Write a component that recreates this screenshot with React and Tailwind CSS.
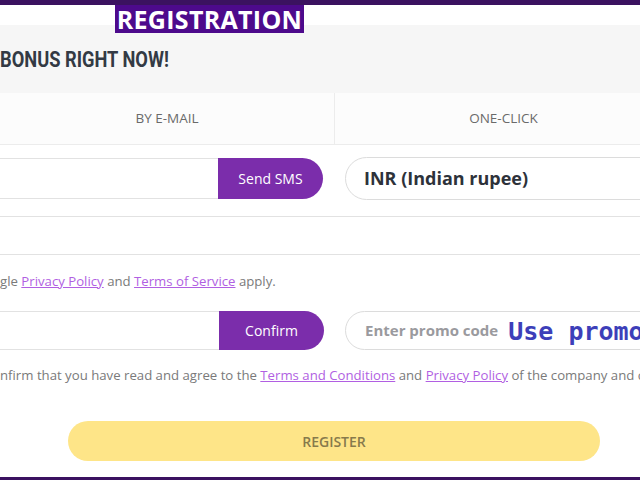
export default function App() {
  const sans = { fontFamily: '"Open Sans", "Noto Sans", sans-serif' };
  return (
    <div className="relative w-[640px] h-[480px] overflow-hidden bg-white" style={sans}>
      <div className="h-[5px] bg-[#3b1260]" />
      <div className="h-[20px] bg-white" />
      <div className="absolute left-[115px] top-[5px] h-[28px] w-[189px] bg-[#4d0a8c] flex items-center justify-center z-10">
        <span className="text-white font-bold text-[25px] leading-none tracking-[0.3px]" style={sans}>REGISTRATION</span>
      </div>
      <div className="h-[68px] bg-[#f6f6f6] flex items-center">
        <span
          className="inline-block origin-left scale-x-[0.83] text-[#333a44] font-bold text-[22px] leading-none mt-[2px] whitespace-nowrap"
          style={{ fontFamily: 'Roboto, sans-serif' }}
        >
          BONUS RIGHT NOW!
        </span>
      </div>
      <div className="flex h-[52px] bg-[#fcfcfc] border-b border-[#ececec] w-[700px]">
        <div className="w-[334px] flex items-center justify-center text-[13.5px] text-[#6a6a6a]">BY E-MAIL</div>
        <div className="w-[338px] border-l border-[#ececec] flex items-center justify-center text-[13.5px] text-[#6a6a6a]">ONE-CLICK</div>
      </div>
      <div className="flex items-center mt-[12px] w-[720px]">
        <div className="w-[218px] h-[41px] border-y border-[#e2e2e2] bg-white" />
        <button className="w-[105px] h-[41px] bg-[#7b2dab] text-white text-[14px] rounded-r-[21px] flex items-center justify-center">
          Send SMS
        </button>
        <div className="ml-[22px] w-[340px] h-[43px] border border-[#dcdcdc] rounded-full flex items-center pl-[18px]">
          <span className="text-[18px] font-bold text-[#2d323a]">INR (Indian rupee)</span>
        </div>
      </div>
      <div className="mt-[16px] h-[39px] border-y border-[#e2e2e2] bg-white" />
      <div className="h-[53px] flex items-center text-[13.2px] text-[#7a7a7a] whitespace-nowrap">
        <span>gle&nbsp;</span>
        <span className="text-[#b15fe2] underline">Privacy Policy</span>
        <span>&nbsp;and&nbsp;</span>
        <span className="text-[#b15fe2] underline">Terms of Service</span>
        <span>&nbsp;apply.</span>
      </div>
      <div className="flex items-center mt-[3px] w-[720px]">
        <div className="w-[219px] h-[39px] border-y border-[#e2e2e2] bg-white" />
        <button className="w-[105px] h-[39px] bg-[#7b2dab] text-white text-[14px] rounded-r-[20px] flex items-center justify-center">
          Confirm
        </button>
        <div className="ml-[21px] w-[340px] h-[39px] border border-[#dcdcdc] rounded-full flex items-center pl-[19px] whitespace-nowrap">
          <span className="text-[15px] font-bold text-[#9a9a9e]">Enter promo code</span>
          <span
            className="ml-[10px] text-[25px] font-bold text-[#3d3fb9] mt-[2px]"
            style={{ fontFamily: '"DejaVu Sans Mono", "Liberation Mono", monospace' }}
          >
            Use promo
          </span>
        </div>
      </div>
      <div className="h-[51px] flex items-center text-[13.2px] text-[#7a7a7a] whitespace-nowrap w-[700px]">
        <span>nfirm that you have read and agree to the&nbsp;</span>
        <span className="text-[#b15fe2] underline">Terms and Conditions</span>
        <span>&nbsp;and&nbsp;</span>
        <span className="text-[#b15fe2] underline">Privacy Policy</span>
        <span>&nbsp;of the company and c</span>
      </div>
      <div className="mt-[20px] pl-[68px]">
        <button className="w-[532px] h-[40px] rounded-full bg-[#fee588] text-[#877a4c] text-[14px] font-semibold flex items-center justify-center">
          REGISTER
        </button>
      </div>
      <div className="absolute left-0 bottom-0 w-full h-[3px] bg-[#3b1260]" />
    </div>
  );
}
